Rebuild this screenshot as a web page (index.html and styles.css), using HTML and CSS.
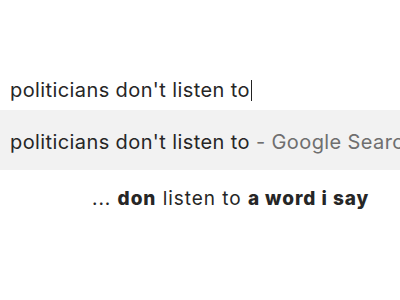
FILE: index.html
```html
<!DOCTYPE html>
<html>
<head>
<meta charset="utf-8">
<link rel="stylesheet" href="styles.css">
</head>
<body>
<div class="page">
  <div class="input-row"><span class="typed">politicians don't listen to</span><span class="caret"></span></div>
  <div class="suggestion"><span class="query">politicians don't listen to</span><span class="source">&nbsp;- Google Search</span></div>
  <div class="completion">... <b>don</b> listen to <b>a word i say</b></div>
</div>
</body>
</html>
```
FILE: styles.css
```css
html, body {
  margin: 0;
  padding: 0;
  background: #fff;
}
.page {
  width: 400px;
  height: 300px;
  overflow: hidden;
  font-family: Inter, "Noto Sans", sans-serif;
  color: #262626;
}
.input-row {
  display: flex;
  align-items: center;
  height: 24px;
  margin-top: 78px;
  padding-left: 10px;
  font-size: 20px;
  letter-spacing: 0.4px;
  white-space: nowrap;
}
.caret {
  display: inline-block;
  width: 1px;
  height: 21px;
  background: #222;
  margin-left: 1px;
}
.suggestion {
  display: flex;
  align-items: center;
  margin-top: 8px;
  height: 60px;
  background: #f2f2f2;
  padding-left: 10px;
  padding-top: 4px;
  box-sizing: border-box;
  font-size: 20px;
  letter-spacing: 0.4px;
  white-space: nowrap;
  overflow: hidden;
}
.source {
  color: #6f6f6f;
}
.completion {
  margin-top: 17px;
  padding-left: 92px;
  font-size: 19px;
  letter-spacing: 0.95px;
  white-space: nowrap;
}
.completion b {
  font-weight: 800;
}
```
